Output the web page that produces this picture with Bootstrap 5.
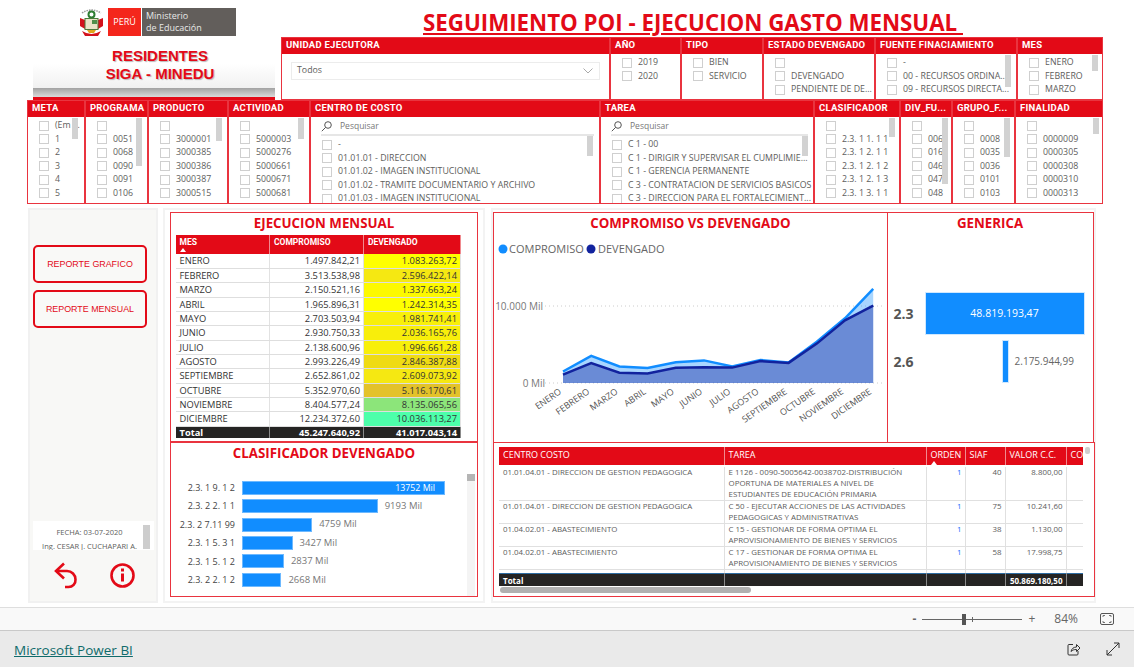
<!DOCTYPE html>
<html lang="es">
<head>
  <meta charset="UTF-8">
  <meta name="viewport" content="width=device-width, initial-scale=1.0">
  <title>Seguimiento POI - Ejecucion Gasto Mensual</title>
  <link href="https://cdn.jsdelivr.net/npm/bootstrap@5.3.0/dist/css/bootstrap.min.css" rel="stylesheet">
  <style>
    :root { --rojo: #e30a17; --borde: #e9343f; --gris: #605e5c; --azul: #118dff; }
    html, body { height: 667px; overflow: hidden; background: #fff; }
    body { font-family: "Open Sans", sans-serif; font-size: 8.8px; color: var(--gris); }
    .report-area { width: 1134px; height: 607px; }

    /* cabecera */
    .top-band { height: 100px; }
    .brand-col { width: 281px; flex: none; }
    .logo-row { height: 47px; padding: 8px 0 0 79px; }
    .logo-crest { width: 25px; height: 29px; margin-right: 4px; }
    .logo-peru { width: 33px; height: 28px; background: #f4261c; color: #fff; font-size: 9px; }
    .logo-min { width: 94px; height: 28px; margin-left: 1px; background: #625e5b; color: #e8e8e8; font-size: 9px; line-height: 12.500px; padding-left: 4px; }
    .brand-fade { width: 242px; height: 41px; margin-left: 33px; padding-left: 12px; background: linear-gradient(#fff 40%, #f1f1f1); color: var(--rojo); font: 700 15px/18px "Liberation Sans", sans-serif; text-shadow: 1px 1px 1px #b9b9b9; }
    .brand-bar { width: 242px; height: 9px; margin-left: 33px; background: linear-gradient(#a2a2a2, #dadada); }
    .brand-red { width: 242px; height: 3px; margin-left: 33px; background: var(--rojo); }
    .main-title { height: 37px; margin: 0; padding: 9px 0 0 142px; font: 700 22.300px/28px "Open Sans", sans-serif; color: var(--rojo); text-decoration: underline; white-space: pre; }

    /* segmentaciones */
    .slicer-wrap { width: 822px; height: 63px; }
    .slicer-row { margin-left: 27px; width: 1076px; height: 104px; }
    .slicer-box { position: relative; border: 1.5px solid var(--borde); overflow: hidden; flex: none; background: #fff; }
    .slicer-head { height: 16px; background: var(--rojo); color: #fff; font: 700 9.500px/14px Roboto, sans-serif; letter-spacing: .25px; padding-left: 4px; white-space: nowrap; overflow: hidden; }
    .slicer-list { padding: 2px 0 0 11px; }
    .slicer-item { height: 13.500px; line-height: 13.500px; white-space: nowrap; }
    .slicer-item .form-check-input { width: 10px; height: 10px; margin: 0 6px 0 0; border-radius: 0; border-color: #cfcfcf; flex: none; }
    .slicer-thumb { position: absolute; top: 17px; width: 6px; background: #d2d2d2; }
    .search-row { height: 19px; padding-top: 2px; margin: 0 5px 0 10px; border-bottom: 2px solid #e6e6e6; color: #777; font-size: 8.500px; }
    .search-row svg { width: 11px; height: 11px; margin-right: 8px; }
    .drop-box { height: 18px; margin: 8px 9px 0 9px; border: 1px solid #ececec; padding: 0 6px 0 5px; }

    /* zona central */
    .main-area { height: 395px; margin-top: 4px; }
    .side-panel { width: 130px; margin-left: 28px; background: #f8f8f6; border: 2px solid #f1f1f1; padding: 35px 4px 12px 3px; }
    .btn-reporte { width: 114px; height: 38px; margin-bottom: 7px; padding: 0; border: 2.500px solid var(--rojo); border-radius: 5px; background: #f9f9f7; color: var(--rojo); font: 400 8.900px "Liberation Sans", sans-serif; }
    .btn-reporte:hover { background: #f9f9f7; color: var(--rojo); border-color: var(--rojo); }
    .autor-box { position: relative; height: 29px; width: 121px; margin-top: auto; background: #fff; font-size: 7.500px; line-height: 14px; text-align: center; padding: 4px 8px 0 0; white-space: nowrap; overflow: hidden; }
    .autor-thumb { position: absolute; right: 4px; top: 4px; width: 7px; height: 24px; background: #cdcdcd; }
    .side-icons { margin-top: 12px; padding: 0 17px 0 21px; }
    .mid-panel { width: 322px; margin-left: 5px; border: 2px solid #f3f3f3; padding: 2px 5px 4px; }
    .right-panel { width: 605px; margin-left: 6px; border: 2px solid #f3f3f3; padding: 2px 0 4px 0; }
    .report-card { border: 1.5px solid var(--borde); background: #fff; position: relative; overflow: hidden; }
    .card-heading { height: 22px; margin: 0; font: 700 13.300px/20px "Open Sans", sans-serif; color: var(--rojo); text-align: center; }
    .spacer-3 { height: 3px; }

    /* tabla mensual */
    .tabla-mes { width: 285px; margin: 0 0 0 4.500px; table-layout: fixed; font-size: 9.300px; }
    .tabla-mes th, .tabla-mes td { padding: 0 3px 0 4px; height: 14.350px; line-height: 13px; border-bottom: 1.5px solid #dedede; border-right: 1px solid #e2e2e2; color: #333; white-space: nowrap; }
    .tabla-mes thead th { height: 19px; background: var(--rojo); color: #fff; font: 700 8.500px/10px Roboto, sans-serif; vertical-align: top; padding-top: 2px; border-right-color: #f08a8f; border-bottom: 0; position: relative; }
    .tabla-mes tfoot td, .tabla-det tfoot td { background: #252423; color: #fff; font-weight: 700; border-top: 1px solid #2d6ca2; border-bottom: 0; border-right: 1px solid #8a8a8a; height: 11px; line-height: 11px; }
    .sort-up { display: block; width: 0; height: 0; margin-top: 1px; border: 3.500px solid transparent; border-top: 0; border-bottom: 4px solid #fff; }

    /* barras clasificador */
    .clas-card { flex: 1; }
    .clas-body { padding: 14px 0 0 0; }
    .clas-row { height: 18.400px; }
    .clas-label { width: 64px; margin-right: 7px; text-align: right; font-size: 9px; color: #444; flex: none; white-space: nowrap; }
    .clas-bar { height: 14px; background: var(--azul); border: 1px solid #6db9ff; color: #fff; text-align: right; padding-right: 9px; line-height: 13px; white-space: nowrap; flex: none; }
    .clas-val { margin-left: 7px; color: #777; font-size: 9.500px; white-space: nowrap; }
    .clas-scroll { position: absolute; right: 2px; top: 31px; width: 8px; height: 122px; background: #f4f4f4; }
    .clas-scroll i { display: block; height: 7px; background: #b5b5b5; }

    /* generica */
    .gen-card { width: 207px; margin-left: -1.500px; }
    .gen-top { height: 57px; }
    .gen-row { height: 43px; margin-bottom: 5px; padding-left: 6px; }
    .gen-label { width: 31px; font-size: 14px; font-weight: 700; color: #555; flex: none; }
    .gen-track { width: 160px; }
    .gen-bar { height: 43px; background: var(--azul); border: 1px solid #cfe8ff; color: #fff; font-size: 10.500px; line-height: 41px; text-align: center; flex: none; }
    .gen-val { margin-left: 6px; font-size: 10px; color: #666; }

    /* tabla detalle */
    .det-card { height: 155px; margin-top: -1.500px; padding: 4px 0 0 5px; width: 602px; }
    .det-clip { width: 584px; overflow: hidden; }
    .det-body { height: 108px; padding-top: 2px; overflow: hidden; }
    .tabla-det { width: 584px; margin: 0; table-layout: fixed; font-size: 7.900px; }
    .tabla-det th, .tabla-det td { padding: 0 3px 0 4px; line-height: 11px; border-bottom: 1px solid #e0e0e0; border-right: 1px solid #e0e0e0; color: #5c5c5c; vertical-align: top; }
    .tabla-det thead th { height: 18px; background: var(--rojo); color: #fff; font-size: 9px; line-height: 13px; padding-top: 1px; font-weight: 400; border-right-color: #f08a8f; border-bottom: 0; white-space: nowrap; overflow: hidden; position: relative; }
    .tabla-det .sort-up { position: absolute; left: 4px; bottom: 0; margin: 0; }
    .tabla-det tfoot td { font-size: 8px; line-height: 11px; padding-top: 1px; }
    .det-hscroll { width: 251px; height: 6px; margin: 1px 0 0 1px; background: #b0b0b0; border-radius: 3px; }
    .det-vscroll { position: absolute; right: 4px; top: 4px; width: 5px; height: 7px; background: #cfcfcf; border-radius: 2px; }

    /* barras inferiores */
    .status-bar { height: 23px; background: #f9f9f9; border-top: 1px solid #dedede; font-size: 12px; color: #666; padding-right: 20px; }
    .zoom-track { position: relative; width: 100px; height: 1px; margin: 0 6px; background: #666; }
    .zoom-thumb { position: absolute; left: 40px; top: -5px; width: 4px; height: 11px; background: #555; }
    .zoom-tick { position: absolute; left: 50px; top: -2px; width: 1px; height: 5px; background: #666; }
    .zoom-pct { margin: 0 22px 0 19px; }
    .zoom-minus { font-weight: 700; }
    .footer-bar { height: 37px; background: #eaeaea; border-top: 1px solid #c9c9c9; padding: 0 14px; }
    .footer-bar a { font-size: 13.500px; color: #0f6b6b; margin-top: 3px; }
    .footer-icons { gap: 25px; }
  </style>
</head>
<body>
  <div class="report-area d-flex flex-column">
    <div class="top-band d-flex">
      <div class="brand-col">
        <div class="logo-row d-flex align-items-start">
          <svg class="logo-crest" viewBox="0 0 25 29">
            <path d="M3 5q9-6 19 0" fill="none" stroke="#999" stroke-width="1.500" stroke-dasharray="1.500 1"/>
            <circle cx="12.500" cy="6.500" r="3" fill="none" stroke="#2e7d32" stroke-width="2"/>
            <path d="M1 10l5 2v9l-5-3zM24 10l-5 2v9l5-3z" fill="#d3121c"/>
            <rect x="6" y="10.500" width="13" height="11" fill="#e9e4c8" stroke="#4a7a3a"/>
            <rect x="13" y="12" width="5" height="4" fill="#4f8f4a"/>
            <path d="M3 23q9.500 6 19 0l-3 5h-13z" fill="#d3121c"/>
            <path d="M8 22h9l-2 3h-5z" fill="#e0a71c"/>
          </svg>
          <div class="logo-peru d-flex align-items-center justify-content-center">PERÚ</div>
          <div class="logo-min d-flex align-items-center"><span>Ministerio<br>de Educación</span></div>
        </div>
        <div class="brand-fade text-center">RESIDENTES<br>SIGA - MINEDU</div>
        <div class="brand-bar"></div>
        <div class="brand-red"></div>
      </div>
      <div class="flex-grow-1">
        <h1 class="main-title">SEGUIMIENTO POI - EJECUCION GASTO MENSUAL </h1>
        <div class="slicer-wrap d-flex" id="filaUno"></div>
      </div>
    </div>
    <div class="slicer-row d-flex" id="filaDos"></div>

    <div class="main-area d-flex">
      <div class="side-panel d-flex flex-column">
        <button class="btn btn-reporte">REPORTE GRAFICO</button>
        <button class="btn btn-reporte">REPORTE MENSUAL</button>
        <div class="autor-box">
          <div>FECHA: 03-07-2020</div>
          <div>Ing. CESAR J. CUCHAPARI A.</div>
          <div class="autor-thumb"></div>
        </div>
        <div class="side-icons d-flex justify-content-between align-items-center">
          <svg width="24" height="27" viewBox="0 0 24 27" fill="none" stroke="#e30a17" stroke-width="2.600">
            <path d="M10 1.500L2 9l8 7.500"/>
            <path d="M2 9h11a8.500 8.500 0 0 1 8.500 8.500 7 7 0 0 1-7 7.500H11"/>
          </svg>
          <svg width="25" height="25" viewBox="0 0 25 25" fill="none" stroke="#e30a17">
            <circle cx="12.500" cy="12.500" r="11" stroke-width="2.600"/>
            <path d="M12.500 10.500v8" stroke-width="3"/>
            <path d="M12.500 5.500v3" stroke-width="3"/>
          </svg>
        </div>
      </div>

      <div class="mid-panel d-flex flex-column">
        <div class="report-card ejec-card">
          <h2 class="card-heading">EJECUCION MENSUAL</h2>
          <table class="tabla-mes" id="tablaMes"></table>
          <div class="spacer-3"></div>
        </div>
        <div class="report-card clas-card">
          <h2 class="card-heading">CLASIFICADOR DEVENGADO</h2>
          <div class="clas-body" id="clasBody"></div>
          <div class="clas-scroll"><i></i></div>
        </div>
      </div>

      <div class="right-panel">
        <div class="d-flex">
          <div class="report-card chart-card">
            <h2 class="card-heading">COMPROMISO VS DEVENGADO</h2>
            <svg id="chart" width="393" height="207" viewBox="494 234 393 207" class="d-block"></svg>
          </div>
          <div class="report-card gen-card">
            <h2 class="card-heading">GENERICA</h2>
            <div id="genBody"></div>
          </div>
        </div>
        <div class="report-card det-card">
          <div class="det-clip">
            <table class="tabla-det" id="detHead"></table>
            <div class="det-body"><table class="tabla-det" id="detBody"></table></div>
            <table class="tabla-det" id="detTotal"></table>
          </div>
          <div class="det-hscroll"></div>
          <div class="det-vscroll"></div>
        </div>
      </div>
    </div>
  </div>

  <div class="status-bar d-flex align-items-center justify-content-end">
    <span class="zoom-minus">-</span>
    <div class="zoom-track"><div class="zoom-thumb"></div><div class="zoom-tick"></div></div>
    <span>+</span>
    <span class="zoom-pct">84%</span>
    <svg width="14" height="12" viewBox="0 0 14 12" fill="none" stroke="#555">
      <rect x=".5" y=".5" width="13" height="11" rx="1.500"/>
      <path d="M3 4V2.500h2M11 4V2.500H9M3 8v1.500h2M11 8v1.500H9" stroke-width=".8"/>
    </svg>
  </div>
  <div class="footer-bar d-flex align-items-center justify-content-between">
    <a href="#">Microsoft Power BI</a>
    <div class="footer-icons d-flex align-items-center">
      <svg width="14" height="14" viewBox="0 0 14 14" fill="none" stroke="#333">
        <path d="M6 2.500H2a1 1 0 0 0-1 1V12a1 1 0 0 0 1 1h8a1 1 0 0 0 1-1V9"/>
        <path d="M4 9.500c.5-3 3-4.500 5.500-4.500V2.500L13 6l-3.500 3.500V7.500c-2.500 0-4 .5-5.500 2z"/>
      </svg>
      <svg width="14" height="14" viewBox="0 0 14 14" fill="none" stroke="#333">
        <path d="M1 13L13 1M8 1h5v5M1 8v5h5"/>
      </svg>
    </div>
  </div>

  <script>
    // filtros de la primera y segunda fila: ancho, titulo, items, scroll [left, alto]
    const filaUno = [
      { w: 329, t: "UNIDAD EJECUTORA", drop: "Todos" },
      { w: 71, t: "AÑO", items: ["2019", "2020"] },
      { w: 82, t: "TIPO", items: ["BIEN", "SERVICIO"] },
      { w: 112, t: "ESTADO DEVENGADO", items: ["", "DEVENGADO", "PENDIENTE DE DE..."] },
      { w: 142, t: "FUENTE FINACIAMIENTO", items: ["-", "00 - RECURSOS ORDINA...", "09 - RECURSOS DIRECTA..."], thumb: [129, 32] },
      { w: 86, t: "MES", items: ["ENERO", "FEBRERO", "MARZO"], thumb: [74, 16] }
    ];
    const filaDos = [
      { w: 58, t: "META", items: ["(Em ...", "1", "2", "3", "4", "5"], thumb: [44, 21] },
      { w: 63, t: "PROGRAMA", items: ["", "0051", "0068", "0090", "0091", "0106"], thumb: [50, 48] },
      { w: 80, t: "PRODUCTO", items: ["", "3000001", "3000385", "3000386", "3000387", "3000515"], thumb: [67, 23] },
      { w: 82, t: "ACTIVIDAD", items: ["", "5000003", "5000276", "5000661", "5000671", "5000681"], thumb: [69, 21] },
      { w: 290, t: "CENTRO DE COSTO", search: true, items: ["-", "01.01.01 - DIRECCION", "01.01.02 - IMAGEN INSTITUCIONAL", "01.01.02 - TRAMITE DOCUMENTARIO Y ARCHIVO", "01.01.03 - IMAGEN INSTITUCIONAL"], thumb: [276, 20, 35] },
      { w: 214, t: "TAREA", search: true, items: ["C 1 - 00", "C 1 - DIRIGIR Y SUPERVISAR EL CUMPLIMIE...", "C 1 - GERENCIA PERMANENTE", "C 3 - CONTRATACION DE SERVICIOS BASICOS", "C 3 - DIRECCION PARA EL FORTALECIMIENT..."], thumb: [201, 20, 35] },
      { w: 86, t: "CLASIFICADOR", items: ["", "2.3. 1 1. 1 1", "2.3. 1 2. 1 1", "2.3. 1 2. 1 2", "2.3. 1 2. 1 3", "2.3. 1 3. 1 1"], thumb: [74, 19] },
      { w: 52, t: "DIV_FU...", items: ["", "006", "016", "046", "047", "048"], thumb: [41, 66] },
      { w: 63, t: "GRUPO_F...", items: ["", "0008", "0035", "0036", "0101", "0103"], thumb: [51, 39] },
      { w: 88, t: "FINALIDAD", items: ["", "0000009", "0000305", "0000308", "0000310", "0000313"], thumb: [77, 16] }
    ];

    function slicerHtml(s) {
      let body = "";
      if (s.drop) {
        body = `<div class="drop-box d-flex align-items-center justify-content-between">${s.drop}
          <svg width="10" height="6" viewBox="0 0 10 6" fill="none" stroke="#aaa"><path d="M.5 .5L5 5 9.500 .5"/></svg></div>`;
      } else {
        if (s.search) {
          body += `<div class="search-row d-flex align-items-center">
            <svg viewBox="0 0 11 11" fill="none" stroke="#555"><circle cx="7" cy="4" r="3.300"/><path d="M4.600 6.400L.8 10.200"/></svg>Pesquisar</div>`;
        }
        body += `<div class="slicer-list">` + s.items.map(i =>
          `<div class="slicer-item d-flex align-items-center"><input class="form-check-input" type="checkbox">${i}</div>`).join("") + `</div>`;
      }
      let thumb = "";
      if (s.thumb) {
        const top = s.thumb[2] || 16.500;
        thumb = `<div class="slicer-thumb" style="left:${s.thumb[0]}px;height:${s.thumb[1]}px;top:${top}px"></div>`;
      }
      return `<div class="slicer-box" style="width:${s.w}px"><div class="slicer-head">${s.t}</div>${body}${thumb}</div>`;
    }
    document.getElementById("filaUno").innerHTML = filaUno.map(slicerHtml).join("");
    document.getElementById("filaDos").innerHTML = filaDos.map(slicerHtml).join("");

    // ejecucion mensual
    const meses = [
      ["ENERO", "1.497.842,21", "1.083.263,72", "#ffff00"],
      ["FEBRERO", "3.513.538,98", "2.596.422,14", "#f5e812"],
      ["MARZO", "2.150.521,16", "1.337.663,24", "#fdf900"],
      ["ABRIL", "1.965.896,31", "1.242.314,35", "#ffff00"],
      ["MAYO", "2.703.503,94", "1.981.741,41", "#f8ef0a"],
      ["JUNIO", "2.930.750,33", "2.036.165,76", "#f8ee0b"],
      ["JULIO", "2.138.600,96", "1.996.661,28", "#f8ef0a"],
      ["AGOSTO", "2.993.226,49", "2.846.387,88", "#efdb14"],
      ["SEPTIEMBRE", "2.652.861,02", "2.609.073,92", "#f5e812"],
      ["OCTUBRE", "5.352.970,60", "5.116.170,61", "#e3c22a"],
      ["NOVIEMBRE", "8.404.577,24", "8.135.065,56", "#8ce57a"],
      ["DICIEMBRE", "12.234.372,60", "10.036.113,27", "#4dffaa"]
    ];
    document.getElementById("tablaMes").innerHTML =
      `<colgroup><col style="width:94px"><col style="width:94px"><col style="width:97px"></colgroup>
       <thead><tr><th>MES<span class="sort-up"></span></th><th>COMPROMISO</th><th>DEVENGADO</th></tr></thead><tbody>` +
      meses.map(m => `<tr><td>${m[0]}</td><td class="text-end">${m[1]}</td><td class="text-end" style="background:${m[3]}">${m[2]}</td></tr>`).join("") +
      `</tbody><tfoot><tr><td>Total</td><td class="text-end">45.247.640,92</td><td class="text-end">41.017.043,14</td></tr></tfoot>`;

    // clasificador
    const clasif = [["2.3. 1 9. 1 2", 13752], ["2.3. 2 2. 1 1", 9193], ["2.3. 2 7.11 99", 4759], ["2.3. 1 5. 3 1", 3427], ["2.3. 1 5. 1 2", 2837], ["2.3. 2 2. 1 2", 2668]];
    document.getElementById("clasBody").innerHTML = clasif.map((c, i) => {
      const w = (c[1] * 203 / 13752).toFixed(1);
      const txt = c[1] + " Mil";
      return `<div class="clas-row d-flex align-items-center"><div class="clas-label">${c[0]}</div>
        <div class="clas-bar" style="width:${w}px">${i === 0 ? txt : ""}</div>${i === 0 ? "" : `<div class="clas-val">${txt}</div>`}</div>`;
    }).join("");

    // generica
    const gen = [["2.3", 48819193.47, "48.819.193,47"], ["2.6", 2175944.99, "2.175.944,99"]];
    document.getElementById("genBody").innerHTML = `<div class="gen-top"></div>` + gen.map((g, i) => {
      const w = (g[1] * 160 / gen[0][1]).toFixed(1);
      return `<div class="gen-row d-flex align-items-center"><div class="gen-label">${g[0]}</div>
        <div class="gen-track d-flex align-items-center ${i ? "ps-5" : ""}">
          ${i ? `<div class="ms-4"></div>` : ""}
          <div class="gen-bar" style="width:${w}px;${i ? "margin-left:5px" : ""}">${i ? "" : g[2]}</div>
          ${i ? `<div class="gen-val text-nowrap">${g[2]}</div>` : ""}
        </div></div>`;
    }).join("");

    // grafico de areas
    const comp = [1498, 3514, 2151, 1966, 2704, 2931, 2139, 2993, 2653, 5353, 8405, 12234];
    const dev = [1083, 2596, 1338, 1242, 1982, 2036, 1997, 2846, 2609, 5116, 8135, 10036];
    const px = i => 563 + i * 28.2;
    const py = v => 382 - v * 0.0077;
    const linea = a => a.map((v, i) => `${px(i).toFixed(1)},${py(v).toFixed(1)}`).join(" ");
    const area = a => `563,382 ${linea(a)} ${px(11).toFixed(1)},382`;
    let g = `<line x1="545" x2="882" y1="305" y2="305" stroke="#ccc" stroke-dasharray="1 3"/>
      <line x1="545" x2="882" y1="382" y2="382" stroke="#ccc" stroke-dasharray="1 3"/>
      <text x="543" y="309" text-anchor="end" font-size="10" fill="#777">10.000 Mil</text>
      <text x="545" y="386" text-anchor="end" font-size="10" fill="#777">0 Mil</text>
      <polygon points="${area(comp)}" fill="#118dff" fill-opacity=".36"/>
      <polygon points="${area(dev)}" fill="#12239e" fill-opacity=".42"/>
      <polyline points="${linea(comp)}" fill="none" stroke="#118dff" stroke-width="2.500"/>
      <polyline points="${linea(dev)}" fill="none" stroke="#12239e" stroke-width="2.500"/>
      <circle cx="503" cy="248" r="4.500" fill="#118dff"/>
      <text x="509" y="252" font-size="11" fill="#666">COMPROMISO</text>
      <circle cx="591" cy="248" r="4.500" fill="#12239e"/>
      <text x="598" y="252" font-size="11" fill="#666">DEVENGADO</text>`;
    meses.forEach((m, i) => {
      const x = px(i) - 1, y = 392;
      g += `<text x="${x}" y="${y}" text-anchor="end" font-size="9" fill="#555" transform="rotate(-35 ${x} ${y})">${m[0]}</text>`;
    });
    document.getElementById("chart").innerHTML = g;

    // tabla de detalle
    const cols = `<colgroup><col style="width:225px"><col style="width:202px"><col style="width:39px"><col style="width:40px"><col style="width:61px"><col style="width:17px"></colgroup>`;
    const detalle = [
      ["01.01.04.01 - DIRECCION DE GESTION PEDAGOGICA", "E 1126 - 0090-5005642-0038702-DISTRIBUCIÓN OPORTUNA DE MATERIALES A NIVEL DE ESTUDIANTES DE EDUCACIÓN PRIMARIA", "1", "40", "8.800,00"],
      ["01.01.04.01 - DIRECCION DE GESTION PEDAGOGICA", "C 50 - EJECUTAR ACCIONES DE LAS ACTIVIDADES PEDAGOGICAS Y ADMINISTRATIVAS", "1", "75", "10.241,60"],
      ["01.04.02.01 - ABASTECIMIENTO", "C 15 - GESTIONAR DE FORMA OPTIMA EL APROVISIONAMIENTO DE BIENES Y SERVICIOS", "1", "38", "1.130,00"],
      ["01.04.02.01 - ABASTECIMIENTO", "C 17 - GESTIONAR DE FORMA OPTIMA EL APROVISIONAMIENTO DE BIENES Y SERVICIOS", "1", "58", "17.998,75"],
      ["01.05.01 - GESTION INSTITUCIONAL", "C 1 - GERENCIA PERMANENTE", "1", "63", "14.702,03"]
    ];
    document.getElementById("detHead").innerHTML = cols +
      `<thead><tr><th>CENTRO COSTO</th><th>TAREA</th><th>ORDEN<span class="sort-up"></span></th><th>SIAF</th><th>VALOR C.C.</th><th>CO</th></tr></thead>`;
    document.getElementById("detBody").innerHTML = cols + `<tbody>` + detalle.map(d =>
      `<tr><td>${d[0]}</td><td>${d[1]}</td><td class="text-end text-primary">${d[2]}</td><td class="text-end">${d[3]}</td><td class="text-end">${d[4]}</td><td></td></tr>`).join("") + `</tbody>`;
    document.getElementById("detTotal").innerHTML = cols +
      `<tfoot><tr><td>Total</td><td></td><td></td><td></td><td class="text-end">50.869.180,50</td><td></td></tr></tfoot>`;
  </script>
  <script src="https://cdn.jsdelivr.net/npm/bootstrap@5.3.0/dist/js/bootstrap.bundle.min.js"></script>
</body>
</html>
